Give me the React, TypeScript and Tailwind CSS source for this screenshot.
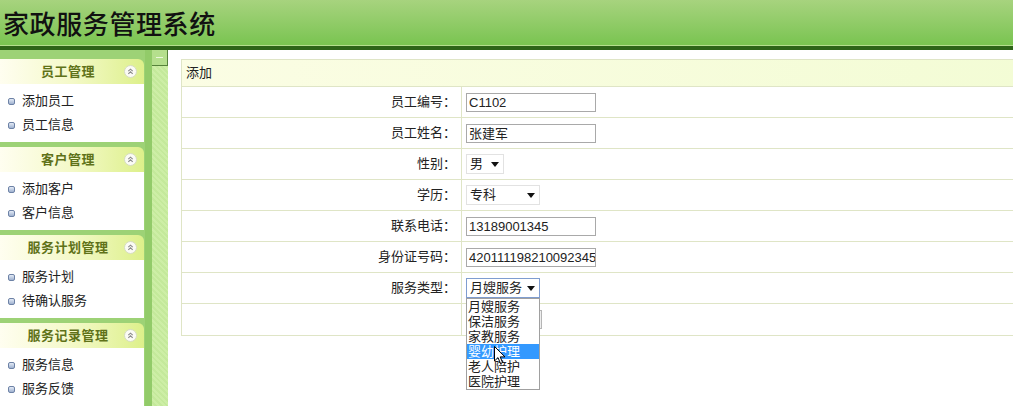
import React from "react";

const FONT = { fontFamily: '"Liberation Sans","Noto Sans CJK SC",sans-serif' };

function Bullet() {
  return (
    <span className="inline-block w-[7px] h-[7px] rounded-[2px] border border-[#6d82a6] bg-gradient-to-b from-[#e4ebf6] to-[#9fb1cf] mr-[7px]" />
  );
}

function ToggleIcon() {
  return (
    <svg width="13" height="13" viewBox="0 0 13 13" className="absolute right-[7px] top-[6px]">
      <circle cx="6.5" cy="6.5" r="6" fill="#fbfbf5" stroke="#d6dcc0" strokeWidth="1" />
      <path d="M4.3 6.2 L6.5 4.2 L8.7 6.2" fill="none" stroke="#8a8a8a" strokeWidth="1.1" />
      <path d="M4.3 8.8 L6.5 6.8 L8.7 8.8" fill="none" stroke="#8a8a8a" strokeWidth="1.1" />
    </svg>
  );
}

function Panel({ title, items }: { title: string; items: string[] }) {
  return (
    <div className="w-[144px]">
      <div className="relative h-[25px] rounded-tr-[6px] bg-gradient-to-r from-[#fffef0] via-[#f4f9c8] to-[#ddf08a] flex items-center justify-center pr-[8px]">
        <span className="text-[13px] font-bold text-[#5f7219] tracking-[0.5px]">{title}</span>
        <ToggleIcon />
      </div>
      <div className="h-[58px] bg-white pt-[5px]">
        {items.map((it) => (
          <div key={it} className="h-[24px] flex items-center pl-[8px] text-[13px] text-[#222]">
            <Bullet />
            {it}
          </div>
        ))}
      </div>
    </div>
  );
}

function TextBox({ value }: { value: string }) {
  return (
    <div className="w-[130px] h-[19px] border border-[#a9a9a9] bg-white text-[13px] leading-[17px] pl-[2px] text-[#222] overflow-hidden whitespace-nowrap">
      {value}
    </div>
  );
}

function Arrow() {
  return (
    <svg width="8" height="5" viewBox="0 0 8 5" className="shrink-0">
      <path d="M0 0 L8 0 L4 5 Z" fill="#111" />
    </svg>
  );
}

function SelectBox({ value, width, focused }: { value: string; width: string; focused?: boolean }) {
  return (
    <div
      className={`${width} h-[20px] bg-white text-[13px] text-[#222] flex items-center justify-between pl-[3px] pr-[4px] border ${
        focused ? "border-[#7f9dd0]" : "border-[#e2e2e2]"
      }`}
    >
      <span>{value}</span>
      <Arrow />
    </div>
  );
}

function Row({ label, children, last }: { label: string; children?: React.ReactNode; last?: boolean }) {
  return (
    <div className={`grid grid-cols-[280px_1fr] h-[31px] ${last ? "" : "border-b border-[#dfe5c6]"}`}>
      <div className="border-r border-[#dfe5c6] flex items-center justify-end pr-[5px] text-[13px] text-[#222]">
        {label}
      </div>
      <div className="flex items-center pl-[4px] relative">{children}</div>
    </div>
  );
}

export default function App() {
  const options = ["月嫂服务", "保洁服务", "家教服务", "婴幼护理", "老人陪护", "医院护理"];
  return (
    <div className="w-[1013px] h-[406px] overflow-hidden relative bg-white" style={FONT}>
      {/* Header */}
      <div className="h-[45px] bg-gradient-to-b from-[#a7d37e] to-[#79c450] flex items-center pl-[3px]">
        <span className="text-[26px] leading-none font-medium text-[#111] tracking-[0.6px]" style={{ fontFamily: '"Noto Sans CJK SC",sans-serif' }}>
          家政服务管理系统
        </span>
      </div>
      <div className="h-[1px] bg-[#b3de8c]" />
      <div className="h-[4px] bg-[#2d6418]" />

      {/* Body */}
      <div className="flex h-[356px]">
        <div className="w-[145px] shrink-0 bg-[#9dd276] flex flex-col gap-[5px] pt-[9px]">
          <Panel title="员工管理" items={["添加员工", "员工信息"]} />
          <Panel title="客户管理" items={["添加客户", "客户信息"]} />
          <Panel title="服务计划管理" items={["服务计划", "待确认服务"]} />
          <Panel title="服务记录管理" items={["服务信息", "服务反馈"]} />
        </div>
        {/* splitter */}
        <div className="w-[7px] shrink-0 bg-[#92cb69]" />
        <div className="w-[16px] shrink-0 flex flex-col bg-[repeating-linear-gradient(45deg,#cdeea6_0px,#cdeea6_2px,#c4e99b_2px,#c4e99b_4px)]">
          <div className="h-[16px] bg-[#b5df8d] border-r border-b border-[#55823a] flex items-center justify-center">
            <div className="w-[7px] h-[1px] bg-[#eaf7dc]" />
          </div>
        </div>

        {/* Main */}
        <div className="flex-1 min-w-0 overflow-hidden bg-white pt-[9px] pl-[13px]">
          <div className="w-[850px] border border-[#dfe5c6]">
            <div className="h-[27px] bg-gradient-to-r from-[#fbfde4] to-[#f3fcd5] border-b border-[#dfe5c6] flex items-center pl-[4px] text-[13px] text-[#222]">
              添加
            </div>
            <Row label="员工编号：">
              <TextBox value="C1102" />
            </Row>
            <Row label="员工姓名：">
              <TextBox value="张建军" />
            </Row>
            <Row label="性别：">
              <SelectBox value="男" width="w-[38px]" />
            </Row>
            <Row label="学历：">
              <SelectBox value="专科" width="w-[74px]" />
            </Row>
            <Row label="联系电话：">
              <TextBox value="13189001345" />
            </Row>
            <Row label="身份证号码：">
              <TextBox value="420111198210092345" />
            </Row>
            <Row label="服务类型：">
              <div className="relative">
                <SelectBox value="月嫂服务" width="w-[74px]" focused />
                <div className="absolute left-0 top-[20px] w-[74px] border border-[#a0a0a0] bg-white z-10">
                  {options.map((o) => (
                    <div
                      key={o}
                      className={`h-[15px] leading-[15px] text-[13px] pl-[1px] ${
                        o === "婴幼护理" ? "bg-[#3399ff] text-white" : "text-[#222]"
                      }`}
                    >
                      {o}
                    </div>
                  ))}
                </div>
                <svg
                  width="12"
                  height="19"
                  viewBox="0 0 12 19"
                  className="absolute left-[28px] top-[68px] z-20"
                >
                  <path
                    d="M0.5 0.5 L0.5 15 L4 11.6 L6.5 17.5 L8.6 16.6 L6.2 10.9 L11 10.9 Z"
                    fill="#fff"
                    stroke="#000"
                    strokeWidth="1"
                    strokeLinejoin="round"
                  />
                </svg>
              </div>
            </Row>
            <Row label="" last>
              <div className="w-[76px] h-[19px] border border-[#b5b5b5] bg-[#eeeeee]" />
            </Row>
          </div>
        </div>
      </div>
    </div>
  );
}
